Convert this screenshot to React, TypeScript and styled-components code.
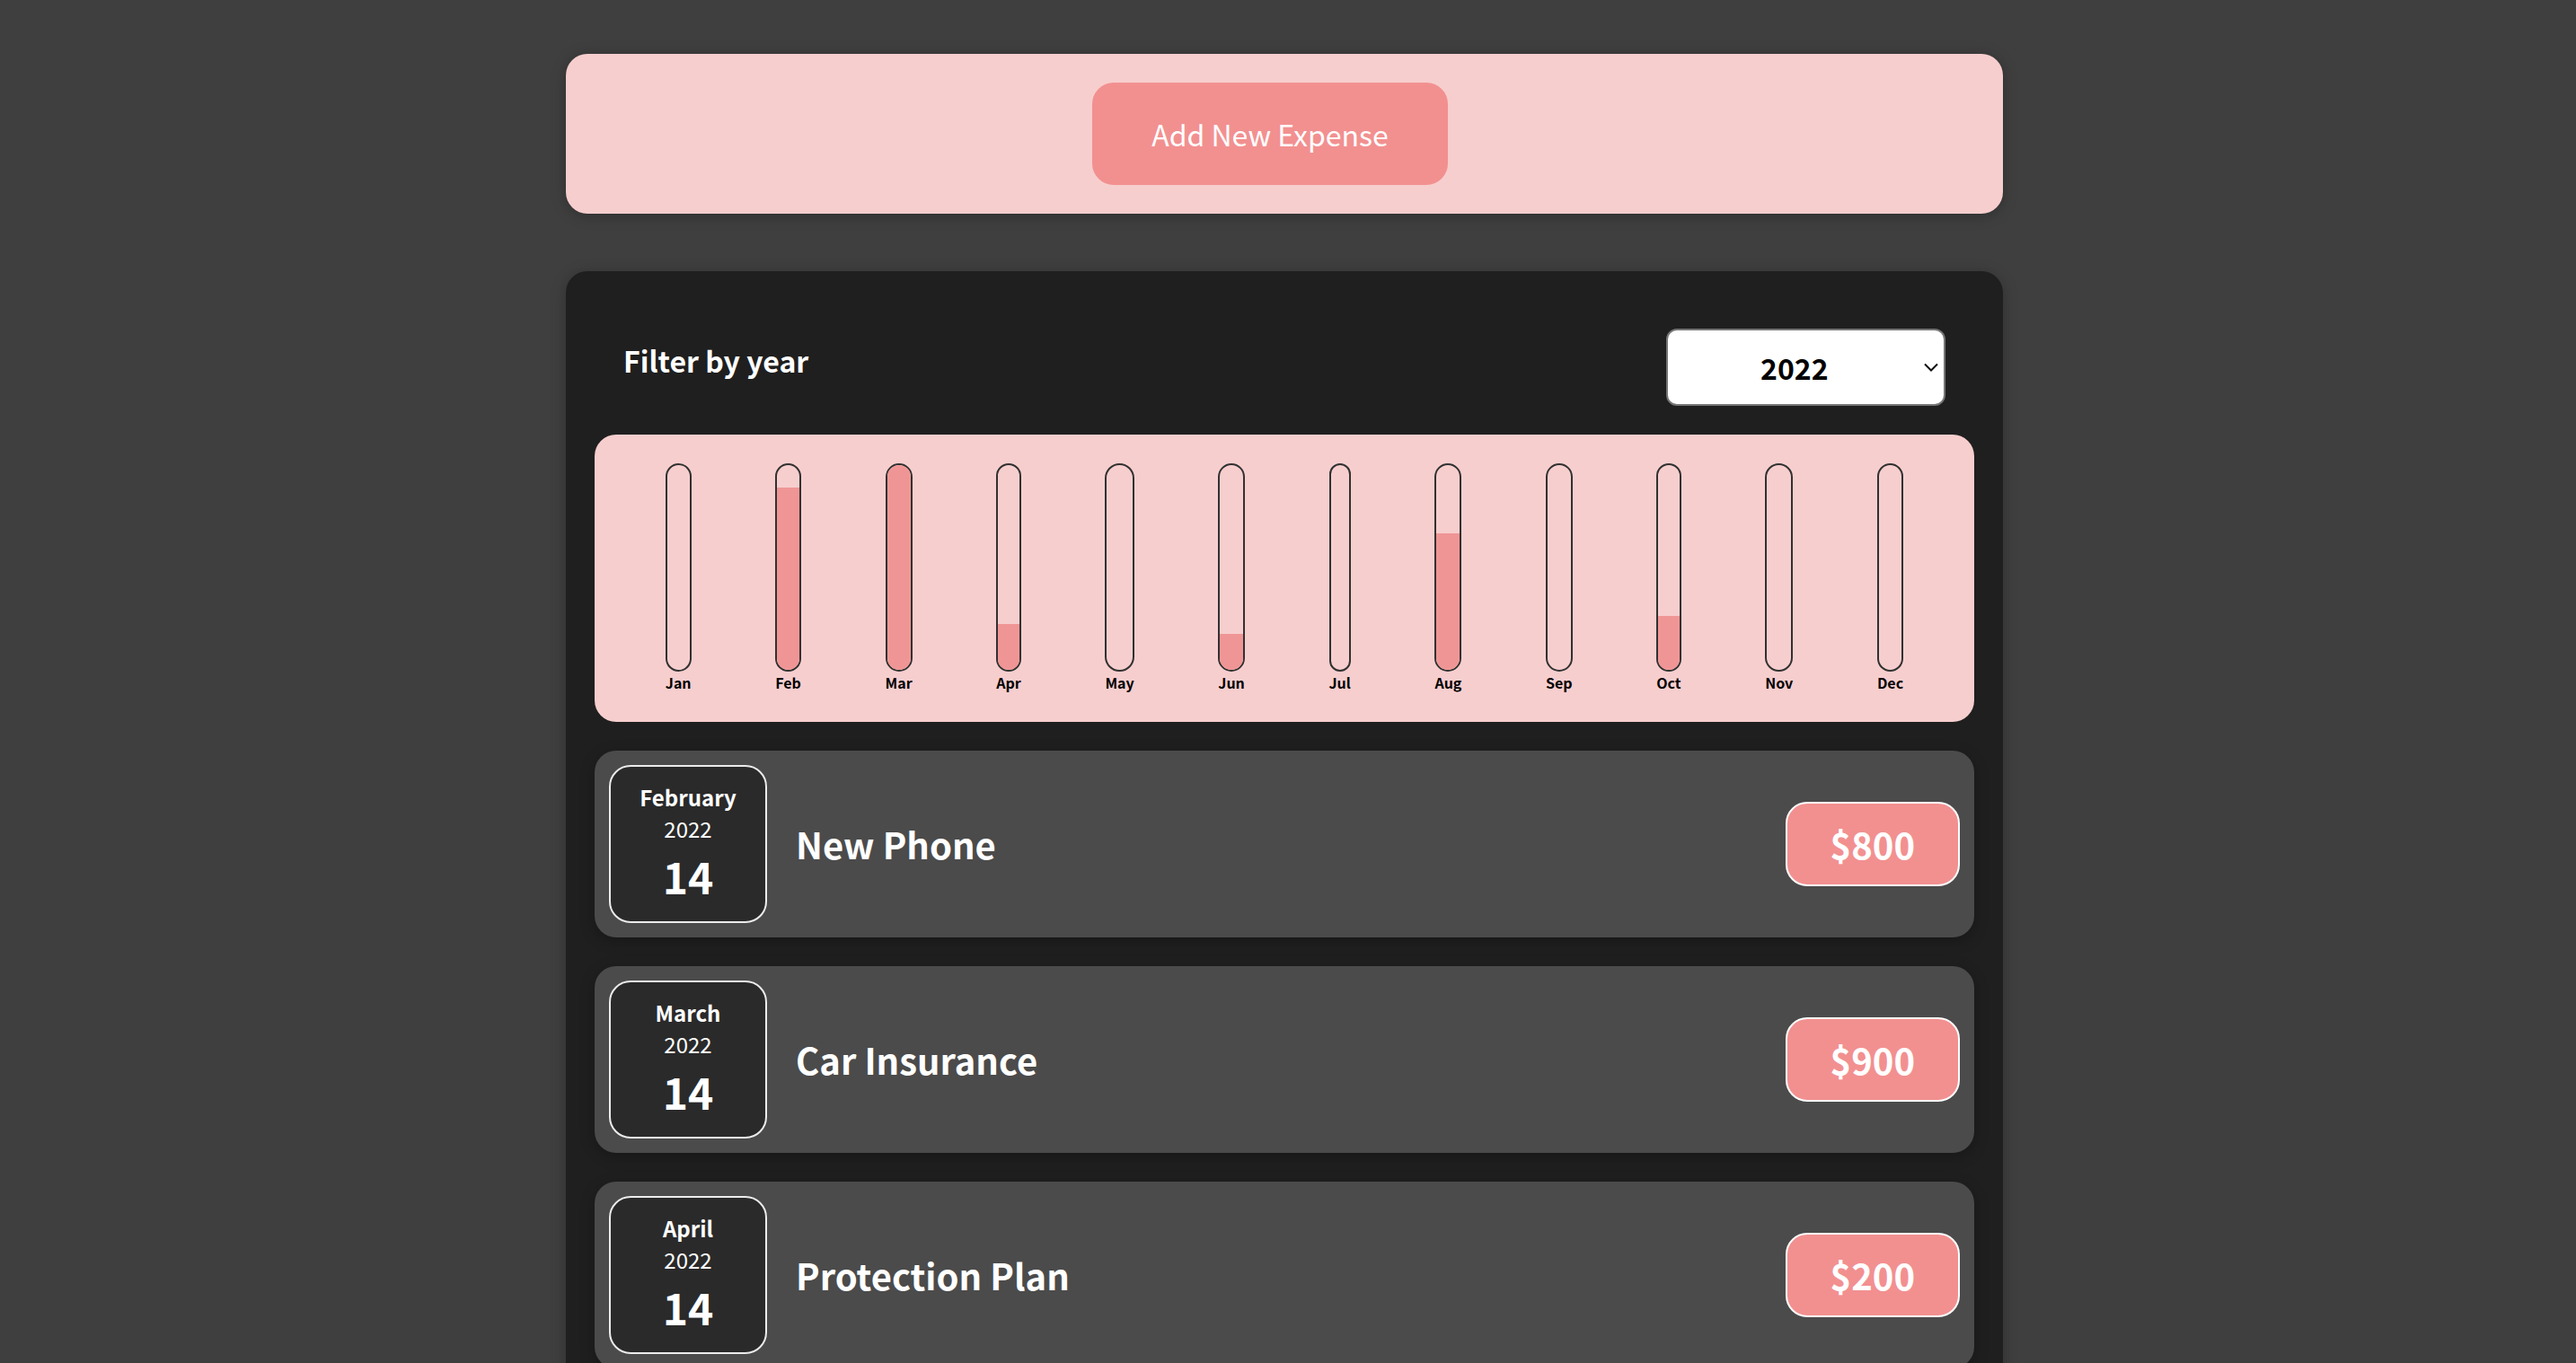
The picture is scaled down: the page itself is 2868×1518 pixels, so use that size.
import React, { useState } from "react";
import styled, { createGlobalStyle } from "styled-components";

const GlobalStyle = createGlobalStyle`
  * {
    box-sizing: border-box;
  }
  html {
    font-family: "Noto Sans CJK JP", "Noto Sans", sans-serif;
    background: #3f3f3f;
  }
  body {
    margin: 0;
    padding-right: 8px;
  }
`;

interface Expense {
  id: string;
  title: string;
  amount: number;
  date: Date;
}

const expenses: Expense[] = [
  { id: "e1", title: "New Phone", amount: 800, date: new Date(2022, 1, 14) },
  { id: "e2", title: "Car Insurance", amount: 900, date: new Date(2022, 2, 14) },
  { id: "e3", title: "Protection Plan", amount: 200, date: new Date(2022, 3, 14) },
];

const chartData = [
  { label: "Jan", fill: 0 },
  { label: "Feb", fill: 88.9 },
  { label: "Mar", fill: 100 },
  { label: "Apr", fill: 22.2 },
  { label: "May", fill: 0 },
  { label: "Jun", fill: 17.6 },
  { label: "Jul", fill: 0 },
  { label: "Aug", fill: 66.7 },
  { label: "Sep", fill: 0 },
  { label: "Oct", fill: 26.3 },
  { label: "Nov", fill: 0 },
  { label: "Dec", fill: 0 },
];

function ExpenseDate({ date }: { date: Date }) {
  const month = date.toLocaleString("en-US", { month: "long" });
  const day = date.toLocaleString("en-US", { day: "2-digit" });
  const year = date.getFullYear();
  return (
    <DateBox>
      <Month>{month}</Month>
      <Year>{year}</Year>
      <Day>{day}</Day>
    </DateBox>
  );
}

export default function App() {
  const [year, setYear] = useState("2022");
  return (
    <>
      <GlobalStyle />
      <NewExpense>
        <AddButton>Add New Expense</AddButton>
      </NewExpense>
      <Expenses>
        <Filter>
          <FilterControl>
            <FilterLabel>Filter by year</FilterLabel>
            <SelectWrap>
              <YearSelect value={year} onChange={(e) => setYear(e.target.value)}>
                <option value="2022">2022</option>
                <option value="2021">2021</option>
                <option value="2020">2020</option>
                <option value="2019">2019</option>
              </YearSelect>
              <Chevron width="16" height="10" viewBox="0 0 16 10">
                <path d="M1 1.5 L8 8.5 L15 1.5" fill="none" stroke="#111" strokeWidth="2" />
              </Chevron>
            </SelectWrap>
          </FilterControl>
        </Filter>
        <Chart>
          {chartData.map((bar) => (
            <ChartBar key={bar.label}>
              <BarInner>
                <BarFill style={{ height: `${bar.fill}%` }} />
              </BarInner>
              <BarLabel>{bar.label}</BarLabel>
            </ChartBar>
          ))}
        </Chart>
        <ExpenseList>
          {expenses.map((item) => (
            <li key={item.id}>
              <ExpenseItem>
                <ExpenseDate date={item.date} />
                <Description>
                  <Title>{item.title}</Title>
                  <Price>${item.amount}</Price>
                </Description>
              </ExpenseItem>
            </li>
          ))}
        </ExpenseList>
      </Expenses>
    </>
  );
}

const Card = styled.div`
  border-radius: 24px;
  box-shadow: 0 2px 16px rgba(0, 0, 0, 0.25);
`;
const NewExpense = styled(Card)`
  background-color: #f7cece;
  padding: 32px;
  margin: 60px auto 64px;
  width: 1600px;
  max-width: 95%;
  text-align: center;
`;
const AddButton = styled.button`
  font: inherit;
  font-size: 32px;
  cursor: pointer;
  padding: 32px 64px;
  border: 2px solid #f29090;
  background-color: #f29090;
  color: white;
  border-radius: 24px;
  margin-right: 32px;
`;
const Expenses = styled(Card)`
  padding: 32px;
  background-color: rgb(31, 31, 31);
  margin: 64px auto;
  width: 1600px;
  max-width: 95%;
`;
const Filter = styled.div`
  color: white;
  padding: 0 32px;
`;
const FilterControl = styled.div`
  display: flex;
  width: 100%;
  align-items: center;
  justify-content: space-between;
  margin: 32px 0;
`;
const FilterLabel = styled.label`
  font-weight: bold;
  font-size: 32px;
  margin-bottom: 16px;
`;
const SelectWrap = styled.div`
  position: relative;
  display: inline-flex;
`;
const YearSelect = styled.select`
  appearance: none;
  font: inherit;
  font-size: 32px;
  padding: 18px 128px 18px 103px;
  font-weight: bold;
  border-radius: 12px;
  border: 2px solid #767676;
  background: white;
  color: black;
`;
const Chevron = styled.svg`
  position: absolute;
  right: 8px;
  top: 50%;
  transform: translateY(-50%);
  pointer-events: none;
`;
const Chart = styled.div`
  padding: 32px;
  border-radius: 24px;
  background-color: #f7cece;
  text-align: center;
  display: flex;
  justify-content: space-around;
  height: 320px;
`;
const ChartBar = styled.div`
  height: 100%;
  display: flex;
  flex-direction: column;
  align-items: center;
`;
const BarInner = styled.div`
  height: 100%;
  width: 100%;
  border: 2px solid #313131;
  border-radius: 24px;
  background-color: #f7cece;
  overflow: hidden;
  display: flex;
  flex-direction: column;
  justify-content: flex-end;
`;
const BarFill = styled.div`
  background-color: #f09595;
  width: 100%;
`;
const BarLabel = styled.div`
  font-weight: bold;
  font-size: 16px;
  text-align: center;
  color: #000;
`;
const ExpenseList = styled.ul`
  list-style: none;
  padding: 0;
  margin: 32px 0;
`;
const ExpenseItem = styled(Card)`
  display: flex;
  justify-content: space-between;
  align-items: center;
  box-shadow: 0 4px 16px rgba(0, 0, 0, 0.25);
  padding: 16px;
  margin: 32px 0;
  background-color: #4b4b4b;
`;
const DateBox = styled.div`
  display: flex;
  flex-direction: column;
  width: 176px;
  height: 176px;
  border: 2px solid #ececec;
  background-color: #2a2a2a;
  color: white;
  border-radius: 24px;
  align-items: center;
  justify-content: center;
`;
const Month = styled.div`
  font-size: 24px;
  font-weight: bold;
`;
const Year = styled.div`
  font-size: 24px;
`;
const Day = styled.div`
  font-size: 48px;
  font-weight: bold;
`;
const Description = styled.div`
  display: flex;
  flex-direction: row;
  align-items: center;
  justify-content: flex-start;
  flex: 1;
`;
const Title = styled.h2`
  font-size: 40px;
  flex: 1;
  margin: 0 32px;
  color: white;
`;
const Price = styled.div`
  font-size: 40px;
  font-weight: bold;
  color: white;
  background-color: #f29090;
  border: 2px solid white;
  padding: 16px 48px;
  border-radius: 24px;
`;
